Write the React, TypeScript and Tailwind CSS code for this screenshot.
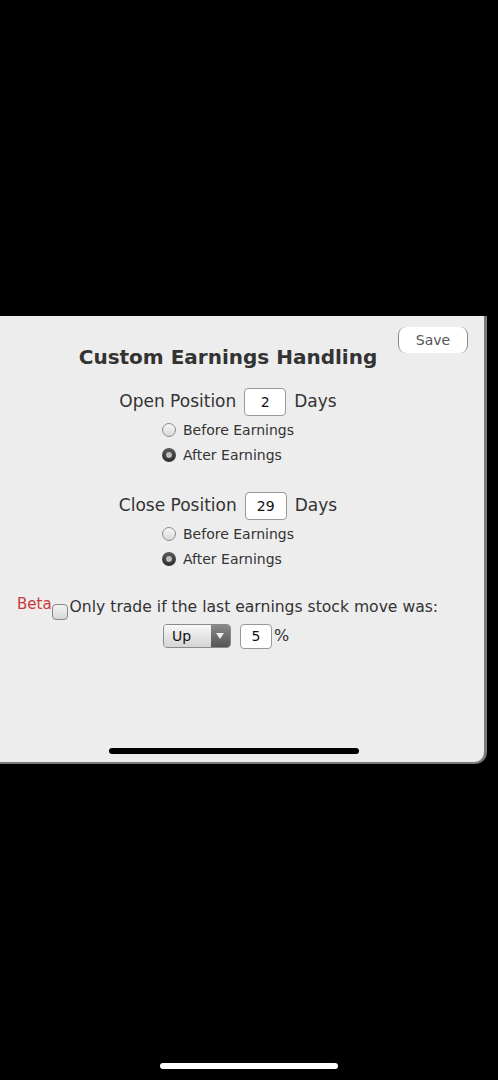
import React from 'react';

function Radio({ checked }: { checked?: boolean }) {
  return checked ? (
    <span className="w-[14px] h-[14px] rounded-full bg-gradient-to-b from-[#5a5a5a] to-[#2e2e2e] flex items-center justify-center">
      <span className="w-[6px] h-[6px] rounded-full bg-[#bbbbbb]" />
    </span>
  ) : (
    <span className="w-[14px] h-[14px] rounded-full border border-[#8a8a8a] bg-gradient-to-b from-[#f6f6f6] to-[#d8d8d8]" />
  );
}

function PositionBlock({ label, days }: { label: string; days: string }) {
  return (
    <div className="flex flex-col items-center">
      <div className="flex items-center gap-2 text-[17px] text-[#333]">
        <span>{label}</span>
        <span className="w-[42px] h-[28px] bg-white border border-[#999] rounded-[4px] flex items-center justify-center text-[14px] text-[#111]">
          {days}
        </span>
        <span>Days</span>
      </div>
      <div className="flex flex-col items-start text-[14px] text-[#333] mt-[5px] gap-[7px]">
        <label className="flex items-center gap-[7px] h-[18px]">
          <Radio />
          Before Earnings
        </label>
        <label className="flex items-center gap-[7px] h-[18px]">
          <Radio checked />
          After Earnings
        </label>
      </div>
    </div>
  );
}

export default function App() {
  return (
    <div className="w-[498px] h-[1080px] bg-black flex flex-col" style={{ fontFamily: '"DejaVu Sans", Verdana, sans-serif' }}>
      <div className="h-[316px]" />
      <div className="w-[487px] h-[448px] bg-[#ededed] border-r-[3px] border-b-[2px] border-[#7a7a7a] rounded-br-[12px] flex flex-col relative">
        <button className="absolute top-[11px] right-[16px] w-[70px] h-[26px] bg-white rounded-[8px] border-x border-[#888] border-y-[#eee] text-[14px] text-[#555]">
          Save
        </button>
        <div className="flex flex-col pr-[28px]">
          <h1 className="text-center font-bold text-[20px] text-[#333] mt-[29px] leading-[24px]">
            Custom Earnings Handling
          </h1>
          <div className="mt-[19px]">
            <PositionBlock label="Open Position" days="2" />
          </div>
          <div className="mt-[28px]">
            <PositionBlock label="Close Position" days="29" />
          </div>
        </div>
        <div className="mt-[25px] flex items-end pl-[17px] text-[15.6px] text-[#333]">
          <span className="text-[#c83a3a] text-[15px] mb-[4px]">Beta</span>
          <span className="w-[16px] h-[16px] border border-[#888] rounded-[4px] bg-gradient-to-b from-[#f4f4f4] to-[#d6d6d6] mr-[2px]" />
          <span>Only trade if the last earnings stock move was:</span>
        </div>
        <div className="flex items-center justify-center gap-[9px] mt-[4px] pr-[32px]">
          <div className="w-[68px] h-[24px] rounded-[4px] border border-[#8a8a8a] flex overflow-hidden">
            <span className="flex-1 bg-gradient-to-b from-[#f8f8f8] to-[#d4d4d4] text-[14px] text-[#111] flex items-center pl-[8px]">Up</span>
            <span className="w-[19px] bg-gradient-to-b from-[#8a8a8a] to-[#555] flex items-center justify-center">
              <svg width="8" height="6" viewBox="0 0 8 6"><path d="M0 0h8L4 6z" fill="#eee" /></svg>
            </span>
          </div>
          <div className="flex items-center gap-[2px]">
            <span className="w-[32px] h-[25px] bg-white border border-[#999] rounded-[4px] flex items-center justify-center text-[14px] text-[#111]">5</span>
            <span className="text-[16px] text-[#333]">%</span>
          </div>
        </div>
        <div className="flex-1" />
        <div className="self-center ml-[-16px] w-[250px] h-[6px] bg-black rounded-full mb-[8px]" />
      </div>
      <div className="flex-1" />
      <div className="self-center w-[178px] h-[6px] bg-white rounded-full mb-[11px]" />
    </div>
  );
}
